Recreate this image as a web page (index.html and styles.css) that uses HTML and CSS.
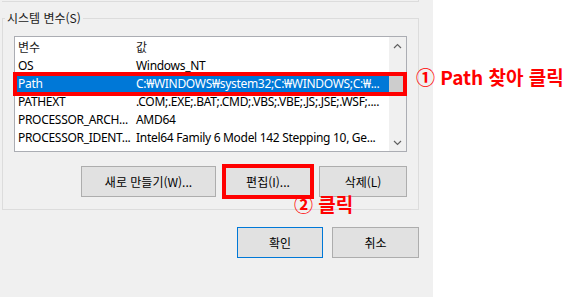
FILE: index.html
```html
<!DOCTYPE html>
<html lang="ko">
<head>
<meta charset="utf-8">
<link rel="stylesheet" href="styles.css">
</head>
<body>
<div class="page">
  <div class="dialog">
    <div class="prev"></div>
    <div class="group">
      <span class="legend">시스템 변수(S)</span>
      <div class="list">
        <div class="list-body">
          <div class="row head"><span class="c1">변수</span><span class="c2">값</span></div>
          <div class="row"><span class="c1">OS</span><span class="c2">Windows_NT</span></div>
          <div class="row sel"><span class="c1">Path</span><span class="c2">C:₩WINDOWS₩system32;C:₩WINDOWS;C:₩...</span></div>
          <div class="row"><span class="c1">PATHEXT</span><span class="c2">.COM;.EXE;.BAT;.CMD;.VBS;.VBE;.JS;.JSE;.WSF;....</span></div>
          <div class="row"><span class="c1">PROCESSOR_ARCH...</span><span class="c2">AMD64</span></div>
          <div class="row"><span class="c1">PROCESSOR_IDENT...</span><span class="c2">Intel64 Family 6 Model 142 Stepping 10, Ge...</span></div>
        </div>
        <div class="scrollbar">
          <div class="arrow">
            <svg width="9" height="6" viewBox="0 0 9 6"><path d="M1 5 L4.5 1.5 L8 5" fill="none" stroke="#606060" stroke-width="1.2"/></svg>
          </div>
          <div class="track"><div class="thumb"></div></div>
          <div class="arrow">
            <svg width="9" height="6" viewBox="0 0 9 6"><path d="M1 1 L4.5 4.5 L8 1" fill="none" stroke="#606060" stroke-width="1.2"/></svg>
          </div>
        </div>
        <div class="mark-row"></div>
      </div>
      <div class="btn-row">
        <button class="btn w-new">새로 만들기(W)...</button>
        <button class="btn w-edit marked">편집(I)...</button>
        <button class="btn w-del">삭제(L)</button>
      </div>
      <div class="note note2">② 클릭</div>
    </div>
    <div class="btn-row bottom">
      <button class="btn w-ok default">확인</button>
      <button class="btn w-cancel">취소</button>
    </div>
  </div>
  <div class="note note1">① Path 찾아 클릭</div>
</div>
</body>
</html>
```

FILE: styles.css
```css
html, body {
  margin: 0;
  padding: 0;
  background: #ffffff;
}
body {
  font-family: "Noto Sans", "Noto Sans CJK KR", sans-serif;
  font-size: 12px;
  color: #000;
}
.page {
  position: relative;
  display: flex;
  width: 581px;
  height: 297px;
  overflow: hidden;
}
.dialog {
  width: 433px;
  height: 297px;
  box-sizing: border-box;
  background: #f0f0f0;
  padding: 0 14px 0 2px;
}
.prev {
  height: 2px;
  box-sizing: border-box;
  border-bottom: 1px solid #dcdcdc;
  border-right: 1px solid #dcdcdc;
}
.group {
  position: relative;
  margin-top: 16px;
  height: 192px;
  box-sizing: border-box;
  border: 1px solid #dcdcdc;
  padding: 17px 11px 0 11px;
}
.legend {
  position: absolute;
  top: -9px;
  left: 2px;
  padding: 0 2px;
  line-height: 16px;
  background: #f0f0f0;
  font-family: "Noto Sans CJK KR", sans-serif;
  color: #1a1a1a;
}
.list {
  position: relative;
  display: flex;
  height: 116px;
  box-sizing: border-box;
  border: 1px solid #abadb3;
  background: #fff;
}
.list-body {
  flex: 1;
  min-width: 0;
}
.row {
  display: flex;
  height: 18px;
  line-height: 18px;
  white-space: nowrap;
  letter-spacing: -0.3px;
}
.row.head {
  height: 20px;
  line-height: 20px;
  font-family: "Noto Sans CJK KR", sans-serif;
  color: #1a1a1a;
  letter-spacing: 0;
}
.c1 {
  width: 117px;
  flex: none;
  box-sizing: border-box;
  padding-left: 3px;
  overflow: hidden;
}
.c2 {
  flex: 1;
  min-width: 0;
  padding-left: 4px;
  overflow: hidden;
}
.row.sel {
  background: #0078d7;
  color: #fff;
}
.scrollbar {
  width: 17px;
  display: flex;
  flex-direction: column;
  background: #f0f0f0;
}
.arrow {
  height: 17px;
  display: flex;
  align-items: center;
  justify-content: center;
}
.track {
  flex: 1;
  padding-top: 20px;
}
.thumb {
  height: 22px;
  background: #cdcdcd;
}
.mark-row {
  position: absolute;
  left: -2px;
  top: 35px;
  width: 394px;
  height: 24px;
  box-sizing: border-box;
  border: 4px solid #ff0000;
}
.btn-row {
  display: flex;
  justify-content: flex-end;
  margin-top: 14px;
}
.btn {
  height: 31px;
  box-sizing: border-box;
  border: 1px solid #adadad;
  background: #e1e1e1;
  font-family: "Noto Sans CJK KR", "Noto Sans", sans-serif;
  font-size: 12px;
  color: #000;
  padding: 0;
}
.w-new { width: 135px; margin-right: 8px; }
.w-edit { width: 88px; margin-right: 7px; }
.w-del { width: 88px; }
.marked {
  outline: 4px solid #ff0000;
  outline-offset: -2px;
}
.btn-row.bottom {
  margin-top: 17px;
}
.w-ok { width: 86px; margin-right: 9px; }
.w-cancel { width: 87px; }
.default {
  border-color: #0078d7;
}
.note {
  position: absolute;
  font-family: "Noto Sans CJK KR", sans-serif;
  font-weight: 700;
  font-size: 19px;
  line-height: 22px;
  color: #ff0000;
  white-space: nowrap;
}
.note1 {
  left: 416px;
  top: 66px;
}
.note2 {
  left: 291px;
  top: 174px;
}
```
